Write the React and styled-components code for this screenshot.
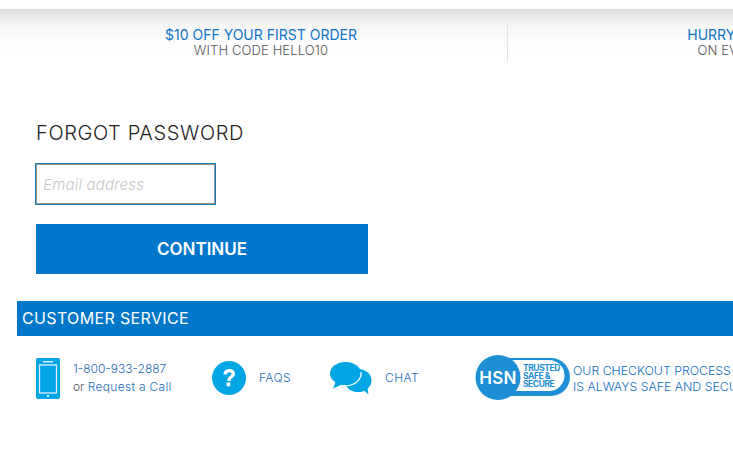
import styled, { createGlobalStyle } from "styled-components";

const GlobalStyle = createGlobalStyle`
  html, body {
    margin: 0;
    padding: 0;
    background: #fff;
    overflow: hidden;
  }
  body {
    font-family: Inter, "Open Sans", sans-serif;
  }
`;

const promos = [
  { title: "$10 OFF YOUR FIRST ORDER", sub: "WITH CODE HELLO10" },
  { title: "HURRY, SHOP NOW", sub: "ON EVERY ORDER" },
];

const PhoneIcon = () => (
  <svg width="24" height="41" viewBox="0 0 24 41">
    <rect width="24" height="41" rx="2" fill="#00a5e3" />
    <rect x="3.500" y="7" width="17" height="28" fill="none" stroke="#d6f1fb" strokeWidth="1.300" />
    <rect x="7" y="3" width="10" height="1.500" fill="#d6f1fb" />
    <rect x="11" y="37" width="2" height="2" fill="#d6f1fb" />
  </svg>
);

const HelpIcon = () => (
  <svg width="34" height="34" viewBox="0 0 34 34">
    <circle cx="17" cy="17" r="17" fill="#00a5e3" />
    <path
      d="M11.500 13.500c0-3.400 2.400-5.500 5.800-5.500 3.300 0 5.700 1.900 5.700 4.800 0 2.200-1.200 3.300-2.600 4.300-1.200.8-1.700 1.400-1.700 2.900h-3.300c0-2.500.8-3.600 2.300-4.700 1.100-.8 1.800-1.300 1.800-2.300 0-1-.8-1.800-2.200-1.800-1.500 0-2.300 1-2.400 2.300z"
      fill="#fff"
    />
    <rect x="14.600" y="21.500" width="3.600" height="3.800" fill="#fff" />
  </svg>
);

const ChatIcon = () => (
  <svg width="42" height="33" viewBox="0 0 42 33">
    <ellipse cx="28" cy="18.500" rx="13.500" ry="11.500" fill="#00a5e3" />
    <path d="M32 27l6.500 5.500-1.500-9z" fill="#00a5e3" />
    <path d="M6 19l-3 7.500 9-4z" fill="#00a5e3" />
    <ellipse cx="15.500" cy="11.500" rx="15.500" ry="11.500" fill="#00a5e3" />
    <path
      d="M31 10c.9 7-5.500 13.500-15 14-1.500.1-3-.1-4.300-.4"
      fill="none"
      stroke="#fff"
      strokeWidth="1.200"
    />
  </svg>
);

const TrustBadge = () => (
  <svg width="96" height="46" viewBox="0 0 96 46">
    <path d="M30 3h46a19 19 0 0 1 0 38H30z" fill="#1e8fd5" />
    <path d="M30 5h44a15.500 15.500 0 0 1 0 31H30z" fill="#fff" />
    <circle cx="23" cy="22.500" r="22.500" fill="#1e8fd5" />
    <HsnText x="23" y="28.500" textAnchor="middle">
      HSN
    </HsnText>
    <BadgeText x="48" y="16">TRUSTED</BadgeText>
    <BadgeText x="48" y="23.800">SAFE &amp;</BadgeText>
    <BadgeText x="48" y="32">SECURE</BadgeText>
  </svg>
);

const App = () => {
  return (
    <Page>
      <GlobalStyle />
      <PromoBar>
        {promos.map((promo) => (
          <PromoItem key={promo.title}>
            <PromoTitle>{promo.title}</PromoTitle>
            <PromoSub>{promo.sub}</PromoSub>
          </PromoItem>
        ))}
      </PromoBar>

      <Form>
        <Title>FORGOT PASSWORD</Title>
        <EmailInput type="text" placeholder="Email address" />
        <ContinueButton type="button">CONTINUE</ContinueButton>
      </Form>

      <ServiceBand>CUSTOMER SERVICE</ServiceBand>

      <ServiceRow>
        <PhoneItem>
          <PhoneIcon />
          <PhoneText>
            <ServiceLink>1-800-933-2887</ServiceLink>
            <span>
              <Muted>or </Muted>
              <CallLink>Request a Call</CallLink>
            </span>
          </PhoneText>
        </PhoneItem>
        <FaqItem>
          <HelpIcon />
          <ItemLabel>FAQS</ItemLabel>
        </FaqItem>
        <ChatItem>
          <ChatIcon />
          <ItemLabel>CHAT</ItemLabel>
        </ChatItem>
        <SecureItem>
          <TrustBadge />
          <SecureText>
            OUR CHECKOUT PROCESS
            <br />
            IS ALWAYS SAFE AND SECURE
          </SecureText>
        </SecureItem>
      </ServiceRow>
    </Page>
  );
};

export default App;

/*
Styles
*/

const Page = styled.div`
  width: 733px;
  height: 450px;
  overflow: hidden;
  padding-top: 9px;
  box-sizing: border-box;
`;

const PromoBar = styled.div`
  display: flex;
  width: 1100px;
  height: 53px;
  padding: 15px 0 0 15px;
  box-sizing: border-box;
  background: linear-gradient(#dcdcdc 0, #f4f4f4 14px, #fcfcfc 30px, #fff 50px);
`;

const PromoItem = styled.div`
  flex: 0 0 493px;
  height: 38px;
  display: flex;
  flex-direction: column;
  align-items: center;
  padding-top: 3px;
  box-sizing: border-box;
  border-right: 1px solid #e4e4e4;
`;

const PromoTitle = styled.div`
  color: #0f74c6;
  font-size: 14px;
  line-height: 16px;
  white-space: nowrap;
`;

const PromoSub = styled.div`
  color: #555;
  font-size: 13px;
  font-weight: 300;
  letter-spacing: 0.12px;
  line-height: 14px;
  white-space: nowrap;
`;

const Form = styled.div`
  display: flex;
  flex-direction: column;
  align-items: flex-start;
  padding: 59px 0 0 36px;
`;

const Title = styled.h1`
  margin: 0 0 19px;
  color: #222;
  font-size: 20px;
  font-weight: 300;
  letter-spacing: 0.62px;
  line-height: 24px;
`;

const EmailInput = styled.input`
  width: 179px;
  height: 40px;
  padding: 0 6px;
  box-sizing: border-box;
  border: 1px solid #999;
  box-shadow: 0 0 0 1px #1877b8;
  outline: none;
  background: #fff;
  font-family: Inter, sans-serif;
  font-size: 15px;
  line-height: 36px;

  &::placeholder {
    color: #c8c8c8;
    font-style: italic;
    font-weight: 300;
    letter-spacing: 0.2px;
    opacity: 1;
  }
`;

const ContinueButton = styled.button`
  width: 332px;
  height: 50px;
  margin-top: 20px;
  border: 0;
  background: #0077cc;
  color: #fff;
  font-family: Inter, sans-serif;
  font-size: 17px;
  font-weight: 600;
`;

const ServiceBand = styled.div`
  margin: 27px 0 0 17px;
  height: 35px;
  padding-left: 5px;
  background: #0077c8;
  color: #fff;
  font-size: 16px;
  font-weight: 400;
  letter-spacing: 0.35px;
  line-height: 34px;
`;

const ServiceRow = styled.div`
  display: flex;
  align-items: center;
  width: 1000px;
  height: 46px;
  margin-top: 19px;
  padding-left: 36px;
`;

const ServiceItem = styled.div`
  display: flex;
  align-items: center;
  flex: none;
`;

const PhoneItem = styled(ServiceItem)`
  width: 176px;
  gap: 13px;
`;

const FaqItem = styled(ServiceItem)`
  width: 118px;
  gap: 13px;
`;

const ChatItem = styled(ServiceItem)`
  width: 145px;
  gap: 13px;
`;

const SecureItem = styled(ServiceItem)`
  gap: 2px;
`;

const PhoneText = styled.div`
  display: flex;
  flex-direction: column;
  gap: 2px;
  font-size: 12px;
  line-height: 16px;
`;

const ServiceLink = styled.span`
  color: #1f6bb8;
  font-size: 12px;
  font-weight: 300;
`;

const CallLink = styled(ServiceLink)`
  letter-spacing: 0.3px;
`;

const ItemLabel = styled(ServiceLink)`
  margin-bottom: 2px;
  letter-spacing: 0.4px;
`;

const Muted = styled.span`
  color: #555;
  font-weight: 300;
`;

const SecureText = styled.div`
  padding-top: 2px;
  color: #0f6ec4;
  font-size: 12.300px;
  font-weight: 300;
  line-height: 16px;
  white-space: nowrap;
`;

const HsnText = styled.text`
  fill: #fff;
  font-family: Inter, sans-serif;
  font-size: 17px;
  font-weight: 600;
  letter-spacing: 0.3px;
`;

const BadgeText = styled.text`
  fill: #1e8fd5;
  font-family: Inter, sans-serif;
  font-size: 8.500px;
  font-weight: 700;
  letter-spacing: -0.45px;
`;
